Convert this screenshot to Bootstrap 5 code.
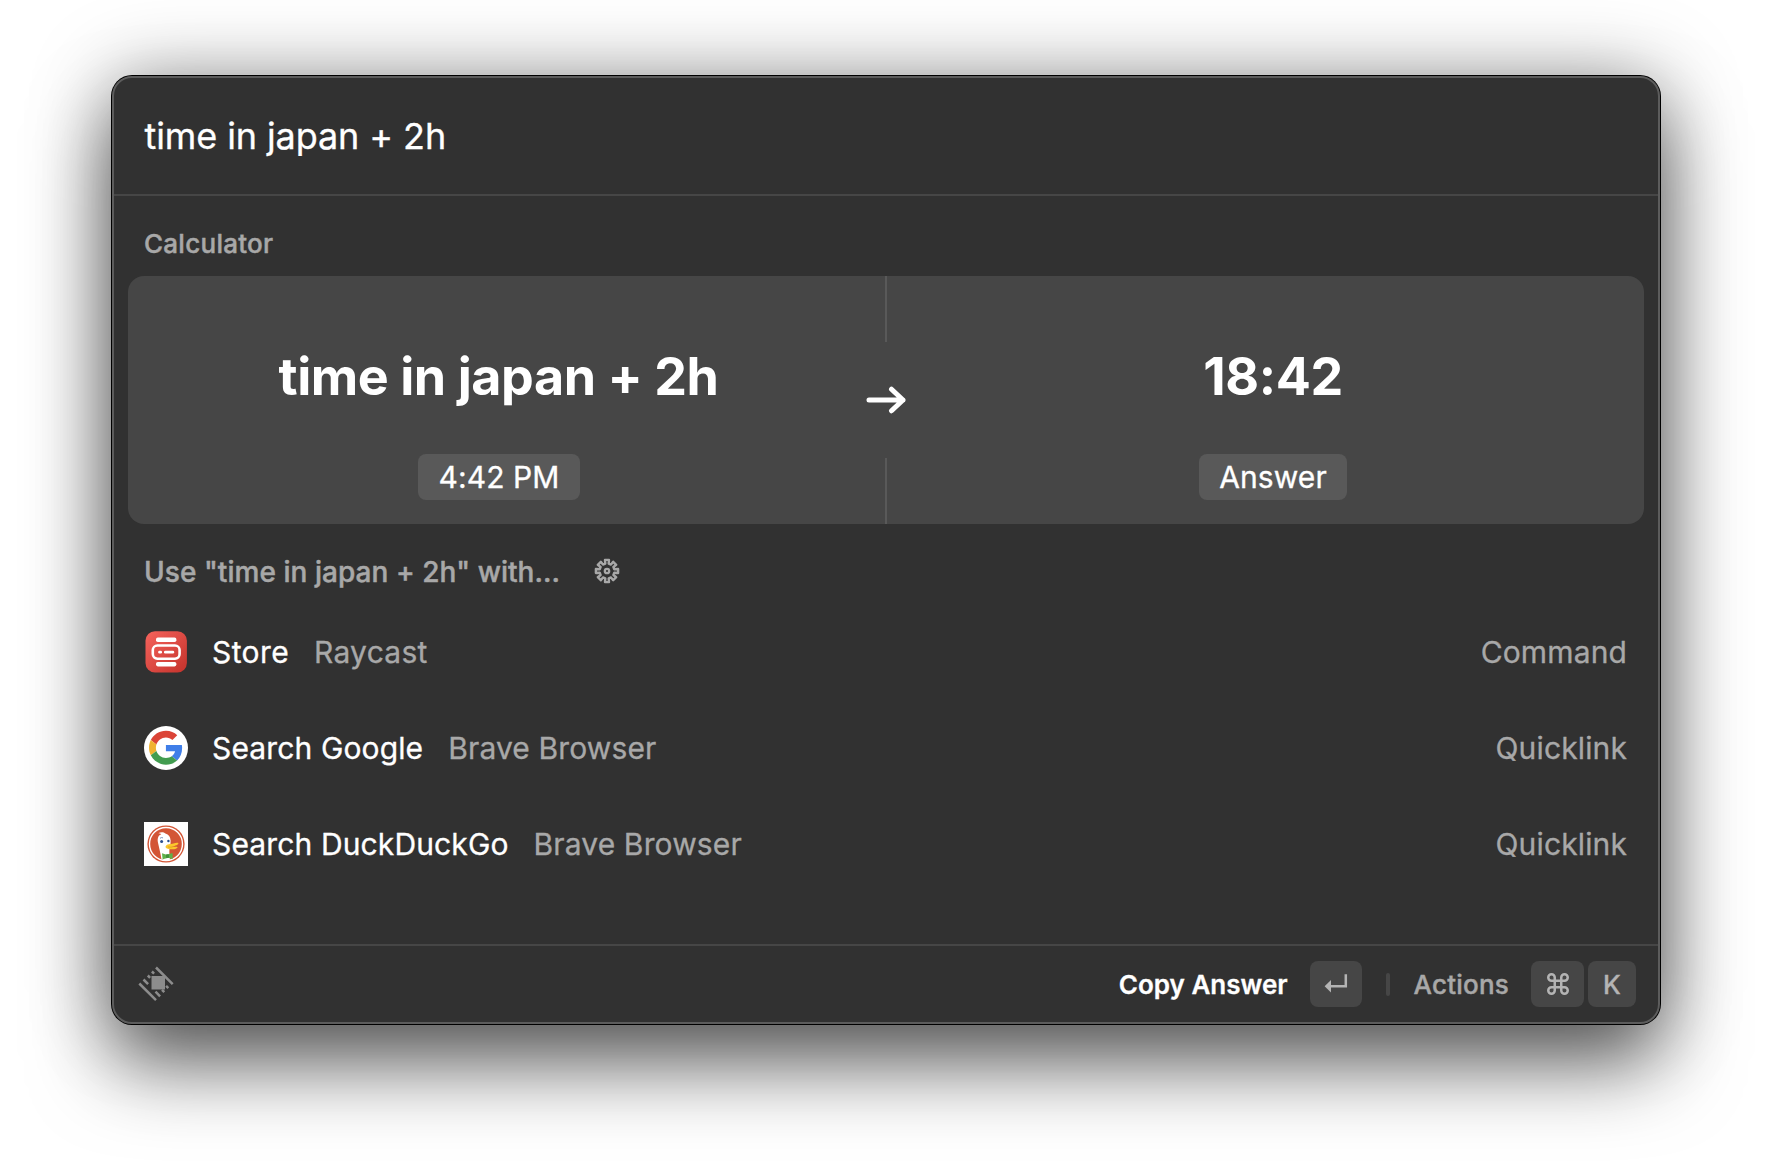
<!DOCTYPE html>
<html lang="en">
<head>
<meta charset="utf-8">
<title>Launcher</title>
<link rel="stylesheet" href="https://cdn.jsdelivr.net/npm/bootstrap@5.3.0/dist/css/bootstrap.min.css">
<style>
body{width:1772px;height:1172px;overflow:hidden;background:#fff;font-family:Inter,"Liberation Sans",sans-serif;-webkit-text-stroke:.3px currentColor;color:#fff;padding:76px 112px}
svg{display:block;flex-shrink:0}
.launcher{width:1548px;height:948px;border-radius:20px;background:#313131;border:2px solid #5c5c5c;box-shadow:0 0 0 1px #000,0 42px 80px rgba(0,0,0,.56),0 0 80px rgba(0,0,0,.34)}
.search-line{height:118px;border-bottom:2px solid #464646;padding:0 31px 0 30.5px;font-size:36px;letter-spacing:-.1px}
.dim{color:#a8a8a8}
.section-label{height:80px;padding:14px 30px 0;font-size:26px;font-weight:500;-webkit-text-stroke-width:.45px}
.section-label.calc{letter-spacing:.27px}
.section-label.use-with{font-size:28px;padding-top:15px;letter-spacing:.05px;gap:34px}
.section-label.use-with svg{margin-bottom:1px}
.calc-card{height:248px;margin:0 14px;border-radius:16px;background:#464646}
.calc-side{flex:1 1 0;padding-bottom:24px;gap:47px}
.calc-value{font-size:52px;line-height:60px;font-weight:700;letter-spacing:-.4px;-webkit-text-stroke-width:0}
.calc-value.expr{letter-spacing:-.44px;margin-left:-1px}
.calc-pill{height:46px;padding:0 20px;border-radius:8px;background:#595959;font-size:30px;letter-spacing:.1px}
.calc-mid{width:32px}
.calc-rule{width:2px;height:66px;background:#595959}
.result{height:96px;padding:0 31px 0 30px;font-size:30px;letter-spacing:.13px}
.result-icon{margin-right:24px}
.result-sub{margin-left:25px}
.result:first-child .result-sub{letter-spacing:.25px}
.result:first-child span:first-of-type{letter-spacing:.4px}
.action-bar{height:78px;border-top:2px solid #464646;padding:0 22px 0 24px;font-size:26px}
.action-name{font-weight:500;letter-spacing:.2px;-webkit-text-stroke-width:.4px}
.keycap{height:46px;width:52px;border-radius:8px;background:#464646;color:#b4b4b4;font-weight:500}
.keycap.enter{margin-left:22px}
.keycap.cmd{width:53px;margin-left:22px}
.keycap.letter{width:48px;margin-left:4px}
.bar-sep{width:4px;height:23px;border-radius:2px;background:#464646;margin:0 24px}
</style>
</head>
<body>
<main class="launcher d-flex flex-column">
  <div class="search-line d-flex align-items-center">time in japan + 2h</div>

  <div class="section-label calc dim d-flex align-items-center">Calculator</div>
  <section class="calc-card d-flex">
    <div class="calc-side d-flex flex-column align-items-center justify-content-end">
      <div class="calc-value expr">time in japan + 2h</div>
      <div class="calc-pill d-flex align-items-center">4:42 PM</div>
    </div>
    <div class="calc-mid d-flex flex-column align-items-center justify-content-between">
      <div class="calc-rule"></div>
      <svg width="40" height="28" viewBox="0 0 40 28" fill="none" stroke="#fff" stroke-width="5" stroke-linecap="round" stroke-linejoin="round"><path d="M3 14H37M25.5 3.2L37 14L25.5 24.8"/></svg>
      <div class="calc-rule"></div>
    </div>
    <div class="calc-side d-flex flex-column align-items-center justify-content-end">
      <div class="calc-value">18:42</div>
      <div class="calc-pill d-flex align-items-center">Answer</div>
    </div>
  </section>

  <div class="section-label use-with dim d-flex align-items-center">
    <span>Use "time in japan + 2h" with...</span>
    <svg width="26" height="26" viewBox="-13 -13 26 26" fill="none" stroke="#a8a8a8" stroke-width="2.4" stroke-linejoin="round"><path d="M7.3 1.7L6.4 4L9.2 6.2L6.2 9.2L4 6.4L1.7 7.3L2 11.1H-2L-1.7 7.3L-4 6.4L-6.2 9.2L-9.2 6.2L-6.4 4L-7.3 1.7L-11.1 2V-2L-7.3 -1.7L-6.4 -4L-9.2 -6.2L-6.2 -9.2L-4 -6.4L-1.7 -7.3L-2 -11.1H2L1.7 -7.3L4 -6.4L6.2 -9.2L9.2 -6.2L6.4 -4L7.3 -1.7L11.1 -2V2Z"/><circle r="2.2" stroke-width="2.3"/></svg>
  </div>

  <div class="flex-grow-1">
    <div class="result d-flex align-items-center">
      <svg class="result-icon" width="44" height="44" viewBox="0 0 44 44"><defs><linearGradient id="red" x1="0" y1="0" x2="1" y2="1"><stop offset="0" stop-color="#f5635c"/><stop offset="1" stop-color="#c4322b"/></linearGradient></defs><rect x="1.5" y="1.2" width="41.4" height="41.4" rx="9.5" fill="url(#red)"/><g fill="#fff"><rect x="12" y="7.6" width="20.4" height="4.4" rx="1.8"/><rect x="12" y="32" width="20.4" height="4.4" rx="1.8"/><rect x="14.2" y="20.7" width="3.8" height="2.8" rx="1.3"/><rect x="20" y="20.7" width="10.2" height="2.8" rx="1.3"/></g><rect x="8.8" y="15.5" width="26.8" height="13.2" rx="4.6" fill="none" stroke="#fff" stroke-width="2.6"/></svg>
      <span>Store</span><span class="result-sub dim">Raycast</span><span class="ms-auto dim">Command</span>
    </div>
    <div class="result d-flex align-items-center">
      <svg class="result-icon" width="44" height="44" viewBox="0 0 44 44"><circle cx="22" cy="22" r="22" fill="#fff"/><g transform="translate(5 4.8) scale(.705)"><path fill="#db4437" d="M24 9.5c3.54 0 6.71 1.22 9.21 3.6l6.85-6.85C35.9 2.38 30.47 0 24 0 14.62 0 6.51 5.38 2.56 13.22l7.98 6.19C12.43 13.72 17.74 9.5 24 9.5z"/><path fill="#3f7ee8" d="M46.98 24.55c0-1.57-.15-3.09-.38-4.55H24v9.02h12.94c-.58 2.96-2.26 5.48-4.78 7.18l7.73 6c4.51-4.18 7.09-10.36 7.09-17.65z"/><path fill="#f0b232" d="M10.53 28.59c-.48-1.45-.76-2.99-.76-4.59s.27-3.14.76-4.59l-7.98-6.19C.92 16.46 0 20.12 0 24c0 3.88.92 7.54 2.56 10.78l7.97-6.19z"/><path fill="#429c50" d="M24 48c6.48 0 11.93-2.13 15.89-5.81l-7.73-6c-2.15 1.45-4.92 2.3-8.16 2.3-6.26 0-11.57-4.22-13.47-9.91l-7.98 6.19C6.51 42.62 14.62 48 24 48z"/></g></svg>
      <span>Search Google</span><span class="result-sub dim">Brave Browser</span><span class="ms-auto dim">Quicklink</span>
    </div>
    <div class="result d-flex align-items-center">
      <svg class="result-icon" width="44" height="44" viewBox="0 0 44 44"><rect width="44" height="44" fill="#fff"/><circle cx="22" cy="22" r="18.6" fill="#d35535"/><circle cx="22" cy="22" r="16.5" fill="none" stroke="#fff" stroke-width="1.4"/><path d="M17.4 37C16.6 31.5 15 25.5 13.9 20.2C13.2 16 14.5 13.2 17.3 12.2C16.4 11.5 15.2 11.4 14.3 11.3C16.4 9.8 19.6 9.8 21.4 11.4C24.8 12.2 26.4 14.8 26.6 18.6C26.8 22.5 25.6 25 25.4 27.5C25.2 30 25.5 34 26 37.7C23 38.6 20 38.2 17.4 37Z" fill="#fff"/><circle cx="17.6" cy="19.4" r="1.5" fill="#2d4f8e"/><circle cx="24.4" cy="19" r="1.2" fill="#2d4f8e"/><path d="M16 16.3Q17.5 15 19 15.9" fill="none" stroke="#6b88b8" stroke-width=".9"/><path d="M21.6 24.4C23 21.6 26.6 22.6 29.4 21.6C31.6 20.8 34 20.6 34.4 21.3C34.6 22.4 31.2 24.2 28.2 24.6C30.6 25 33.2 24.4 33.5 25.2C33.6 26.4 30 27.6 27 27.2C24 26.9 20.9 26 21.6 24.4Z" fill="#fcc62c"/><path d="M24 24.9C26 25.5 27.5 25 29 24.7" fill="none" stroke="#d89a1a" stroke-width=".7"/><path d="M18 31.2L22.6 32.8L28.6 31V37.2L24.5 35.8L18.6 37.2Z" fill="#5fb04a"/><rect x="22" y="32.3" width="3" height="3.8" rx=".8" fill="#42903a"/></svg>
      <span>Search DuckDuckGo</span><span class="result-sub dim">Brave Browser</span><span class="ms-auto dim">Quicklink</span>
    </div>
  </div>

  <footer class="action-bar d-flex align-items-center">
    <svg width="36" height="36" viewBox="0 0 36 36" fill="none" stroke="#8c8c8c" stroke-width="2.5"><path d="M18 1.5L34.7 18.2M13.9 5.5L16.1 7.7M9.8 9.5L12.1 11.8M5.5 13.5L10.1 18.1M30.3 22.1L28.1 19.9M26.3 26.1L24 23.8M22.1 30.3L17.5 25.7M1.3 17.5L18 34.2"/><path d="M13.5 10H27V23.5H13.5Z" fill="#8c8c8c" stroke="none"/></svg>
    <span class="ms-auto fw-semibold">Copy Answer</span>
    <span class="keycap enter d-flex align-items-center justify-content-center"><svg width="24" height="20" viewBox="0 0 24 20"><path d="M21.8 .3V12.3H6" fill="none" stroke="#b4b4b4" stroke-width="2.5"/><path d="M.6 12.3L7 6.1V18.5Z" fill="#b4b4b4"/></svg></span>
    <span class="bar-sep"></span>
    <span class="action-name dim">Actions</span>
    <span class="keycap cmd d-flex align-items-center justify-content-center"><svg width="26" height="26" viewBox="0 0 24 24" fill="none" stroke="#b4b4b4" stroke-width="2.3"><path d="M18 3a3 3 0 0 0-3 3v12a3 3 0 1 0 3-3H6a3 3 0 1 0 3 3V6a3 3 0 1 0-3 3h12a3 3 0 1 0 0-6z"/></svg></span>
    <span class="keycap letter d-flex align-items-center justify-content-center">K</span>
  </footer>
</main>
<script src="https://cdn.jsdelivr.net/npm/bootstrap@5.3.0/dist/js/bootstrap.bundle.min.js"></script>
</body>
</html>
